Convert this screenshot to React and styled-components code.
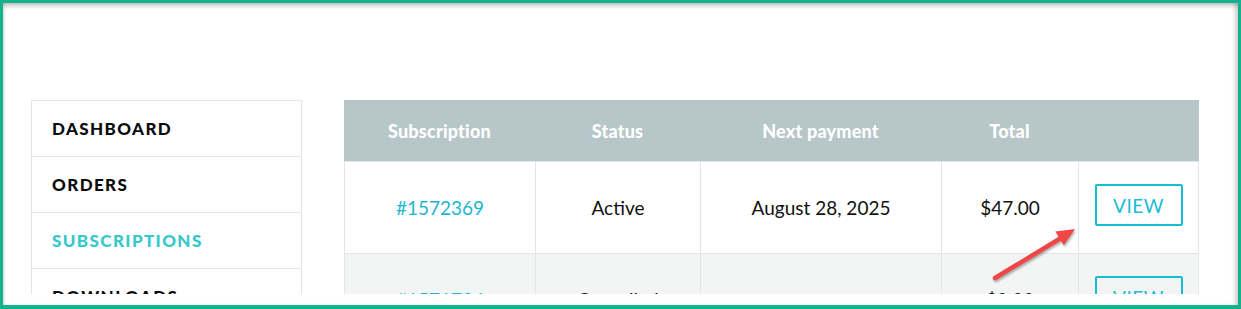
import React from "react";
import styled, { createGlobalStyle } from "styled-components";

const GlobalStyle = createGlobalStyle`
  html, body {
    margin: 0;
    padding: 0;
    background: #fff;
    overflow: hidden;
  }
  * { box-sizing: border-box; }
`;

// frame around the screenshot
const Frame = styled.div`
  width: 1241px;
  height: 309px;
  border: 3px solid #12b28d;
  border-bottom-width: 4px;
  background: #fff;
  position: relative;
  box-shadow: inset 0 5px 4px -2px rgba(0, 0, 0, 0.22),
    inset -5px 0 4px -2px rgba(0, 0, 0, 0.18),
    inset 3px 0 3px -1px rgba(0, 0, 0, 0.1);
`;

const Viewport = styled.div`
  position: relative;
  height: 291px;
  overflow: hidden;
  padding: 97px 0 0 28px;
  display: flex;
  align-items: flex-start;
  gap: 42px;
  font-family: "Lato", "Liberation Sans", sans-serif;
`;

const Sidebar = styled.nav`
  width: 271px;
  flex-shrink: 0;
  border: 1px solid #e1e6ea;
  border-bottom: none;
`;

const NavItem = styled.div`
  height: 56px;
  display: flex;
  align-items: center;
  padding-left: 20px;
  border-bottom: 1px solid #e1e6ea;
  font-size: 17px;
  font-weight: 900;
  letter-spacing: 1.4px;
  text-transform: uppercase;
  color: ${(p) => (p.$active ? "#36c8cb" : "#0b0b0b")};
`;

const Table = styled.div`
  width: 855px;
  flex-shrink: 0;
`;

const cols = "191px 165px 241px 137px 121px";

const HeadRow = styled.div`
  display: grid;
  grid-template-columns: ${cols};
  height: 61px;
  background: #b7c6c9;
`;

const HeadCell = styled.div`
  display: flex;
  align-items: center;
  justify-content: center;
  color: #fff;
  font-size: 18px;
  font-weight: 900;
  letter-spacing: 0.2px;
`;

const Row = styled.div`
  display: grid;
  grid-template-columns: ${cols};
  height: 92px;
  border-top: 1px solid #e1e6ea;
  background: ${(p) => (p.$alt ? "#f3f5f5" : "#fff")};
`;

const Cell = styled.div`
  display: flex;
  align-items: center;
  justify-content: center;
  border-left: 1px solid #e1e6ea;
  font-size: 19px;
  color: #111;
  &:last-child {
    border-right: 1px solid #e1e6ea;
  }
`;

const OrderLink = styled.a`
  color: #1eb6cf;
  text-decoration: none;
`;

const ViewButton = styled.button`
  width: 88px;
  height: 42px;
  margin-top: -5px;
  background: transparent;
  border: 2px solid #17bdd3;
  border-radius: 2px;
  color: #17bdd3;
  font-family: inherit;
  font-size: 19px;
  letter-spacing: 0.5px;
  cursor: pointer;
`;

const Arrow = styled.svg`
  position: absolute;
  left: -3px;
  top: -3px;
  pointer-events: none;
  filter: drop-shadow(1px 2px 1px rgba(0, 0, 0, 0.3));
`;

const nav = ["Dashboard", "Orders", "Subscriptions", "Downloads"];

const rows = [
  { id: "#1572369", status: "Active", next: "August 28, 2025", total: "$47.00" },
  { id: "#1571724", status: "Cancelled", next: "", total: "$0.00" },
];

export default function App() {
  return (
    <>
      <GlobalStyle />
      <Frame>
        <Viewport>
          <Sidebar>
            {nav.map((n) => (
              <NavItem key={n} $active={n === "Subscriptions"}>
                {n}
              </NavItem>
            ))}
          </Sidebar>
          <Table>
            <HeadRow>
              <HeadCell>Subscription</HeadCell>
              <HeadCell>Status</HeadCell>
              <HeadCell>Next payment</HeadCell>
              <HeadCell>Total</HeadCell>
              <HeadCell />
            </HeadRow>
            {rows.map((r, i) => (
              <Row key={r.id} $alt={i % 2 === 1}>
                <Cell>
                  <OrderLink href="#">{r.id}</OrderLink>
                </Cell>
                <Cell>{r.status}</Cell>
                <Cell>{r.next}</Cell>
                <Cell>{r.total}</Cell>
                <Cell>
                  <ViewButton>VIEW</ViewButton>
                </Cell>
              </Row>
            ))}
          </Table>
          <Arrow width="1241" height="309">
            <line x1="995" y1="278" x2="1061" y2="238" stroke="#ef4646" strokeWidth="4.5" strokeLinecap="round" />
            <polygon points="1075,229 1055.4,231.6 1063.8,245.2" fill="#ef4646" />
          </Arrow>
        </Viewport>
      </Frame>
    </>
  );
}
